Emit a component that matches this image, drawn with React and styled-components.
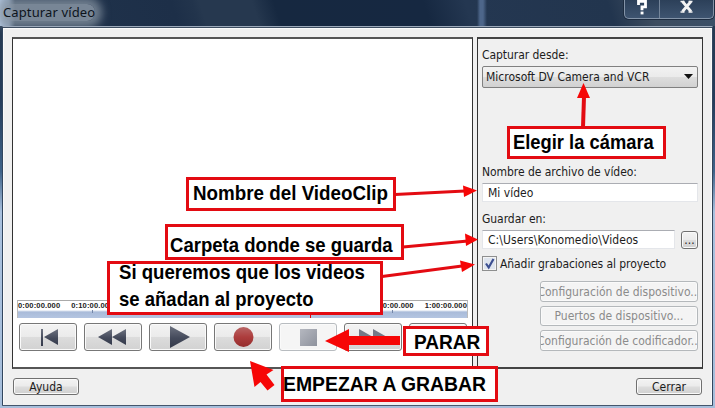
import React from "react";
import styled, { createGlobalStyle } from "styled-components";

const GlobalStyle = createGlobalStyle`
  * { box-sizing: border-box; }
  body { margin: 0; overflow: hidden; }
`;

const Window = styled.div`
  position: relative;
  width: 715px;
  height: 408px;
  overflow: hidden;
  display: flex;
  flex-direction: column;
  padding: 0 2px 2px;
  background: linear-gradient(180deg, #26394f 0, #253d5c 25%, #3f6389 42%, #a9c1de 52%, #a6bedb 100%);
  font-family: "DejaVu Sans Condensed", "DejaVu Sans", sans-serif;
  font-stretch: condensed;
  font-size: 12px;
  color: #1c1c1c;
`;

const TitleBar = styled.header`
  height: 26px;
  flex: none;
  margin: 0 -2px;
  display: flex;
  justify-content: space-between;
  background:
    linear-gradient(90deg, #b4c8e2 0, #8fa5c1 9px, rgba(90, 110, 135, 0) 15px),
    linear-gradient(90deg, transparent 477px, #4d668a 480px, #4d668a 483px, transparent 487px),
    linear-gradient(72deg, #21344d 0, #1d2f48 170px, #22344c 190px, #26384f 197px, #26384f 247px, #162840 268px, #162841 410px, #243751 450px, #22354e 585px, #3d4d60 625px, #3b5068 100%);
  background-color: #182a43;
`;

const Title = styled.h1`
  margin: 4px 0 0 3px;
  height: 17px;
  font: 400 13px/17px "Noto Sans", sans-serif;
  color: #0d141c;
  letter-spacing: 0.12px;
  white-space: nowrap;
  background: rgba(136, 149, 163, 0.85);
  box-shadow: 0 0 9px 7px rgba(136, 149, 163, 0.75);
  border-radius: 8px;
`;

const Caption = styled.div`
  display: flex;
  width: 90px;
  height: 19px;
  margin-right: 1px;
  border: 1px solid #8494a8;
  border-top: 0;
  border-radius: 0 0 5px 5px;
  background: linear-gradient(#2c4059, #3e5470);
  box-shadow: 0 0 0 1px #1d2c40;
`;

const CaptionButton = styled.button`
  flex: ${(p) => p.$grow};
  border: 0;
  padding: 0;
  background: none;
  display: flex;
  justify-content: center;
  & + & { border-left: 1px solid #74859a; }
`;

const Client = styled.main`
  flex: 1;
  display: flex;
  flex-direction: column;
  background: #f0f0f0;
  border: 1px solid #32465e;
  border-top-color: #9daabb;
  border-bottom-color: #45566c;
  border-radius: 1px;
  box-shadow: inset 0 1px #3d4d60, inset 0 2px #fbfbfb, inset 1px 0 #fafafa, inset -1px 0 #fafafa;
  padding: 10px 9px 0 9px;
`;

const Panels = styled.div`
  display: flex;
  height: 332px;
  gap: 4px;
`;

const Preview = styled.section`
  width: 461px;
  border: 1px solid #333;
  border-top: 2px solid #555;
  border-bottom: 2px solid #555;
  background: #fff;
  display: flex;
  flex-direction: column;
  justify-content: flex-end;
  padding: 0 4px 16px;
`;

const Ruler = styled.div`
  height: 18px;
  margin-bottom: 5px;
  border-left: 1px solid #bbb;
  border-right: 1px solid #bbb;
  border-top: 1px solid #aaa;
  background:
    repeating-linear-gradient(90deg, transparent 0 74px, #7486a8 74px 75px) 0 9px / 100% 3px no-repeat,
    linear-gradient(#fff 0 9px, #a9bbd9 11px, #b4c5e1 100%);
  display: flex;
  justify-content: space-between;
  font: 700 7.6px/10px "Liberation Sans", sans-serif;
  color: #222;
`;

const StampGroup = styled.div`
  display: flex;
  gap: 11px;
`;

const Stamp = styled.span`
  white-space: nowrap;
  letter-spacing: 0.12px;
`;

const Transport = styled.div`
  display: flex;
  gap: 7px;
  padding: 0 2px;
`;

const ControlButton = styled.button`
  flex: 1;
  height: 28px;
  padding: 0;
  display: flex;
  align-items: center;
  justify-content: center;
  border: 1px solid ${(p) => (p.$faded ? "#b8bcc0" : "#777")};
  border-radius: 3px;
  background: ${(p) => (p.$faded ? "#f5f5f5" : "linear-gradient(#f3f3f3, #ebebeb 48%, #dcdcdc 52%, #d2d2d2)")};
  box-shadow: inset 0 0 0 1px #fafafa;
`;

const Settings = styled.section`
  width: 226px;
  border: 1px solid #333;
  border-top: 2px solid #444;
  border-bottom: 2px solid #444;
  padding: 7px 4px 0 4px;
  display: flex;
  flex-direction: column;
`;

const FieldLabel = styled.label`
  height: 20px;
  line-height: 18px;
  white-space: nowrap;
  letter-spacing: -0.05px;
`;

const Select = styled.div`
  height: 22px;
  margin: 0 0 75px;
  padding: 0 4px 0 3px;
  display: flex;
  align-items: center;
  justify-content: space-between;
  border: 1px solid #808080;
  border-radius: 2px;
  background: linear-gradient(#f2f2f2, #ebebeb 48%, #dddddd 52%, #d1d1d1);
  white-space: nowrap;
`;

const Row = styled.div`
  display: flex;
  align-items: center;
  gap: 6px;
  height: ${(p) => p.$h || 19}px;
  margin-bottom: ${(p) => p.$below || 0}px;
  letter-spacing: ${(p) => p.$track || 0}px;
  white-space: nowrap;
`;

const TextField = styled.div`
  flex: 1;
  height: 19px;
  line-height: 18px;
  padding-left: 5px;
  background: #fff;
  border: 1px solid #e4e6ea;
  border-top-color: #abadb3;
  white-space: nowrap;
`;

const Button = styled.button`
  width: ${(p) => p.$w}px;
  height: ${(p) => p.$h}px;
  padding: 0;
  overflow: hidden;
  display: flex;
  justify-content: center;
  align-items: center;
  white-space: nowrap;
  font: inherit;
  color: ${(p) => (p.$disabled ? "#8b8b8b" : "#1c1c1c")};
  border: 1px solid ${(p) => (p.$disabled ? "#b4b8bb" : "#707070")};
  border-radius: 3px;
  background: ${(p) => (p.$disabled ? "#f4f4f4" : "linear-gradient(#f3f3f3, #ebebeb 48%, #dddddd 52%, #d0d0d0)")};
  box-shadow: inset 0 0 0 1px #fafafa;
`;

const CheckBox = styled.span`
  width: 15px;
  height: 15px;
  margin-right: -3px;
  border: 1px solid #8e8f8f;
  background: #dfe5ee;
  box-shadow: inset 0 0 0 1px #f4f4f4;
  display: flex;
`;

const DeviceActions = styled.div`
  display: flex;
  flex-direction: column;
  align-items: flex-end;
  gap: 4px;
`;

const Footer = styled.footer`
  display: flex;
  justify-content: space-between;
  padding: 9px 0 0 1px;
  width: 690px;
`;

const Callout = styled.div`
  position: absolute;
  left: ${(p) => p.$x}px;
  top: ${(p) => p.$y}px;
  width: ${(p) => p.$w}px;
  height: ${(p) => p.$h}px;
  border: 3px solid #e30b12;
  background: #fff;
  font: 700 20.5px/27px "Liberation Sans", Arial, sans-serif;
  color: #000;
  white-space: nowrap;
`;

const CalloutText = styled.div`
  margin: ${(p) => p.$top}px 0 0 ${(p) => p.$left}px;
`;

const CalloutLine = styled.div`
  width: max-content;
  transform: scaleX(${(p) => p.$scale});
  transform-origin: left;
`;

const ArrowLayer = styled.svg`
  position: absolute;
  inset: 0;
  pointer-events: none;
`;

const STAMPS = [["0:00:00.000", "0:10:00.000"], ["0:50:00.000", "1:00:00.000"]];

const ICONS = {
  start: <path d="M21 6h2v17h-2zM38 6v16L24 14z" />,
  rewind: <path d="M27 6v16L13 14zM41 6v16L27 14z" />,
  play: <path d="M20 3v22l20-11z" />,
  record: <circle cx="28.500" cy="14" r="10" fill="url(#red)" />,
  stop: <path d="M20 6h17v17H20z" fill="url(#pale)" />,
  forward: <path d="M14 6v16l14-8zM28 6v16l14-8z" fill="#747987" />,
  end: <path d="M19 6v16l14-8zM34 6h2v16h-2z" />,
};

function Icon({ name }) {
  return (
    <svg width="56" height="28" viewBox="0 0 56 28" fill="url(#steel)">
      <defs>
        <linearGradient id="steel" x1="0" y1="0" x2="0" y2="1">
          <stop offset="0" stopColor="#6d7280" /><stop offset=".55" stopColor="#444a5b" /><stop offset="1" stopColor="#343a4b" />
        </linearGradient>
        <linearGradient id="pale" x1="0" y1="0" x2="1" y2="1">
          <stop offset="0" stopColor="#b5b8c0" /><stop offset="1" stopColor="#8e929d" />
        </linearGradient>
        <linearGradient id="red" x1="0" y1="0" x2="0" y2="1">
          <stop offset="0" stopColor="#b96565" /><stop offset=".5" stopColor="#ad3d3d" /><stop offset="1" stopColor="#942d2d" />
        </linearGradient>
      </defs>
      {ICONS[name]}
    </svg>
  );
}

const CALLOUTS = [
  { x: 507, y: 126, w: 159, h: 33, top: -1, left: 3, lines: [["Elegir la cámara", 0.895]] },
  { x: 186, y: 177, w: 210, h: 34, top: -1, left: 4, lines: [["Nombre del VideoClip", 0.917]] },
  { x: 165, y: 224, w: 239, h: 36, top: 4, left: 2, lines: [["Carpeta donde se guarda", 0.905]] },
  { x: 107, y: 261, w: 276, h: 54, top: -6, left: 9, lines: [["Si queremos que los videos", 0.907], ["se añadan al proyecto", 0.903]] },
  { x: 403, y: 326, w: 86, h: 30, top: -1, left: 8, lines: [["PARAR", 0.93]] },
  { x: 281, y: 366, w: 217, h: 36, top: 1, left: -1, lines: [["EMPEZAR A GRABAR", 0.945]] },
];

export default function App() {
  return (
    <Window>
      <GlobalStyle />
      <TitleBar>
        <Title>Capturar vídeo</Title>
        <Caption>
          <CaptionButton $grow="0 0 34px">
            <svg width="14" height="18" fill="none" stroke="#fff" strokeWidth="2.800">
              <path d="M3.500 5V1.400h7v5.400H7v3.400" /><path d="M5.600 11.600h2.900v2.800H5.600z" fill="#fff" stroke="none" />
            </svg>
          </CaptionButton>
          <CaptionButton $grow="1">
            <svg width="14" height="14" fill="none" stroke="#f4f4f4" strokeWidth="2.800">
              <path d="M2.500 1.500l8.500 10M11 1.500l-8.500 10" /><path d="M.5 12h4m4 0h4M.5 1.500h4m4 0h4" strokeWidth="1.400" />
            </svg>
          </CaptionButton>
        </Caption>
      </TitleBar>
      <Client>
        <Panels>
          <Preview>
            <Ruler>
              {STAMPS.map((group) => (
                <StampGroup key={group[0]}>{group.map((s) => <Stamp key={s}>{s}</Stamp>)}</StampGroup>
              ))}
            </Ruler>
            <Transport>
              {Object.keys(ICONS).map((name) => (
                <ControlButton key={name} $faded={name === "stop"}><Icon name={name} /></ControlButton>
              ))}
            </Transport>
          </Preview>
          <Settings>
            <FieldLabel>Capturar desde:</FieldLabel>
            <Select>
              Microsoft DV Camera and VCR
              <svg width="9" height="6"><path d="M0 0h9L4.500 5z" fill="#111" /></svg>
            </Select>
            <FieldLabel>Nombre de archivo de vídeo:</FieldLabel>
            <Row $below={8}><TextField>Mi vídeo</TextField></Row>
            <FieldLabel>Guardar en:</FieldLabel>
            <Row $below={7} $track={0.08}>
              <TextField>C:\Users\Konomedio\Videos</TextField>
              <Button $w={17} $h={18}>...</Button>
            </Row>
            <Row $h={15} $below={10} $track={-0.08}>
              <CheckBox>
                <svg width="13" height="13" fill="none" stroke="#3c4f91" strokeWidth="2.200"><path d="M3 6.500l2.700 4L10.500 2" /></svg>
              </CheckBox>
              Añadir grabaciones al proyecto
            </Row>
            <DeviceActions>
              <Button $w={158} $h={21} $disabled>Configuración de dispositivo...</Button>
              <Button $w={158} $h={20} $disabled>Puertos de dispositivo...</Button>
              <Button $w={158} $h={21} $disabled>Configuración de codificador...</Button>
            </DeviceActions>
          </Settings>
        </Panels>
        <Footer>
          <Button $w={66} $h={17}>Ayuda</Button>
          <Button $w={66} $h={17}>Cerrar</Button>
        </Footer>
      </Client>
      {CALLOUTS.map((c) => (
        <Callout key={c.x} $x={c.x} $y={c.y} $w={c.w} $h={c.h}>
          <CalloutText $top={c.top} $left={c.left}>
            {c.lines.map(([text, scale]) => <CalloutLine key={text} $scale={scale}>{text}</CalloutLine>)}
          </CalloutText>
        </Callout>
      ))}
      <ArrowLayer width="715" height="408">
        <g stroke="#e30b12" strokeWidth="3">
          <path d="M583 127l1-30" strokeWidth="4" /><path d="M395 194.500l70-3.500" /><path d="M403 247l65-6" /><path d="M382 276.500l80-10.500" />
          <path d="M310.500 315v3" strokeWidth="1" />
        </g>
        <g fill="#f60606">
          <path d="M583.500 83l6.500 15h-13z" />
          <path d="M463 185.500l14 5-13 6.500z" />
          <path d="M465 233.500l13 6-12 6.500z" />
          <path d="M460 260.500l15 4-13 7.500z" />
          <path d="M325 341l24-12v7h51v9h-51v7z" />
          <path d="M250 361l23.500 9-7 4.500 8 10.500-7 5.500-7-8.500-6 5z" />
        </g>
      </ArrowLayer>
    </Window>
  );
}
